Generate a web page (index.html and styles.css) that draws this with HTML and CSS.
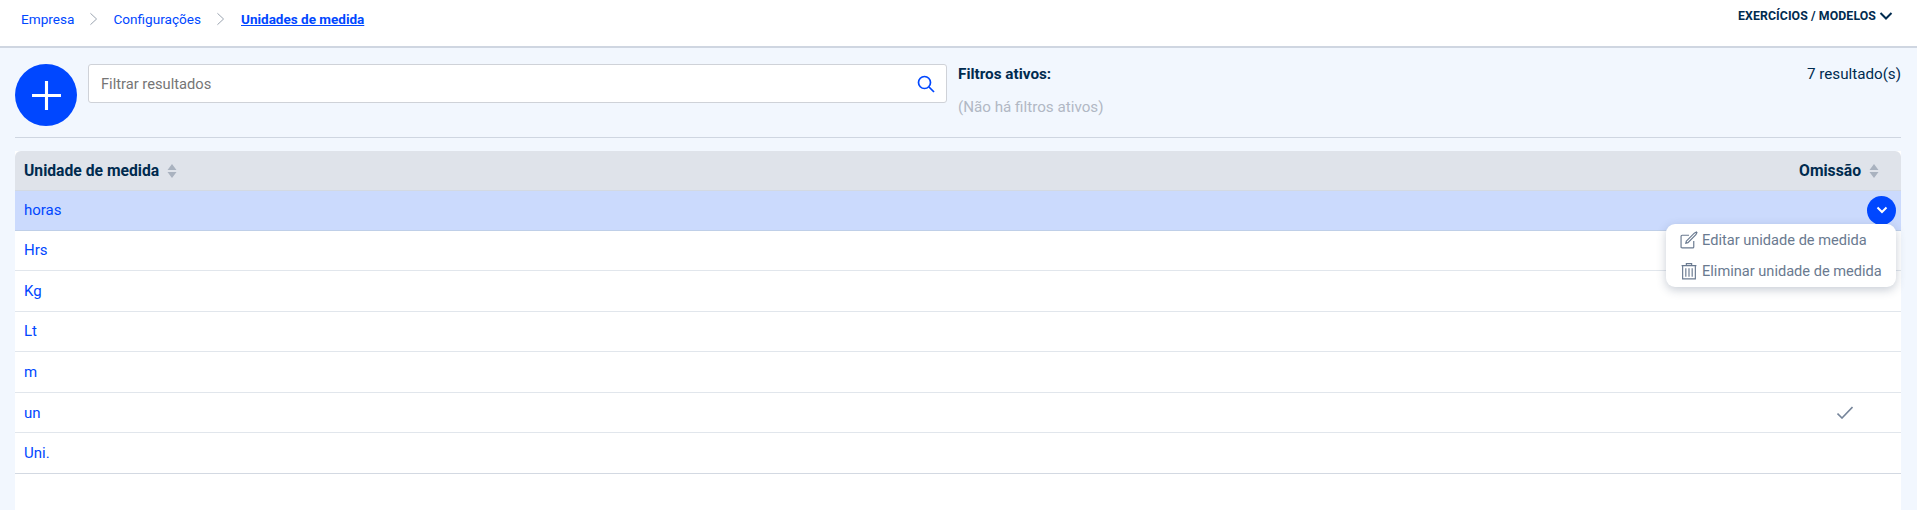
FILE: index.html
```html
<!DOCTYPE html>
<html lang="pt">
<head>
<meta charset="utf-8">
<title>Unidades de medida</title>
<link rel="stylesheet" href="styles.css">
</head>
<body>
<header class="topbar">
  <nav class="crumbs">
    <a class="crumb">Empresa</a>
    <svg class="crumb-sep" viewBox="0 0 10 16"><path d="M1.500 1.500 8.500 8l-7 6.500"/></svg>
    <a class="crumb">Configurações</a>
    <svg class="crumb-sep" viewBox="0 0 10 16"><path d="M1.500 1.500 8.500 8l-7 6.500"/></svg>
    <a class="crumb crumb-current">Unidades de medida</a>
  </nav>
  <div class="exercises">EXERCÍCIOS / MODELOS
    <svg class="exercises-chevron" viewBox="0 0 14 10"><path d="M1.500 2 7 7.500 12.500 2"/></svg>
  </div>
</header>
<main class="page">
  <section class="toolbar">
    <button class="add-btn" aria-label="Adicionar">
      <svg viewBox="0 0 30 30"><path d="M15 1v28M1 15h28"/></svg>
    </button>
    <div class="search">
      <span class="search-placeholder">Filtrar resultados</span>
      <svg class="search-icon" viewBox="0 0 18 18"><circle cx="7.500" cy="7.500" r="6"/><path d="M12 12l5 5"/></svg>
    </div>
    <div class="filters">
      <div class="filters-title">Filtros ativos:</div>
      <div class="filters-empty">(Não há filtros ativos)</div>
    </div>
    <div class="results">7 resultado(s)</div>
  </section>
  <section class="sheet">
    <div class="thead">
      <div class="th">Unidade de medida
        <svg class="sort" viewBox="0 0 10 14"><path d="M5 0l4.500 6H.5zM5 14 .5 8h9z"/></svg>
      </div>
      <div class="th">Omissão
        <svg class="sort" viewBox="0 0 10 14"><path d="M5 0l4.500 6H.5zM5 14 .5 8h9z"/></svg>
      </div>
    </div>
    <div class="row row-active">
      <span class="cell-name">horas</span>
      <button class="row-toggle" aria-label="Opções">
        <svg viewBox="0 0 12 8"><path d="M1.500 1.500 6 6l4.500-4.500"/></svg>
      </button>
      <div class="menu">
        <div class="menu-item">
          <svg class="menu-icon" viewBox="0 0 17 17"><path d="M13 9.500V15a1 1 0 0 1-1 1H2a1 1 0 0 1-1-1V5a1 1 0 0 1 1-1h6.500"/><path d="M6 9.500 13.500 2 15.500 1l.5.500-1 2L7.500 11 5.500 11.500z"/></svg>
          Editar unidade de medida
        </div>
        <div class="menu-item">
          <svg class="menu-icon" viewBox="0 0 17 17"><path d="M1.500 3.500h14M6 3.500V1.500h5v2M2.500 3.500V16h12V3.500M5.500 6v8M8.500 6v8M11.500 6v8"/></svg>
          Eliminar unidade de medida
        </div>
      </div>
    </div>
    <div class="row"><span class="cell-name">Hrs</span></div>
    <div class="row"><span class="cell-name">Kg</span></div>
    <div class="row"><span class="cell-name">Lt</span></div>
    <div class="row"><span class="cell-name">m</span></div>
    <div class="row">
      <span class="cell-name">un</span>
      <svg class="check" viewBox="0 0 16 13"><path d="M.5 7.500 5 12 15.500 1"/></svg>
    </div>
    <div class="row"><span class="cell-name">Uni.</span></div>
  </section>
</main>
</body>
</html>
```
FILE: styles.css
```css
* { box-sizing: border-box; }
html, body { margin: 0; height: 100%; }
body {
  font-family: Roboto, "Liberation Sans", sans-serif;
  font-size: 15px;
  color: #002b4f;
  background: #f2f7fe;
  overflow: hidden;
  display: flex;
  flex-direction: column;
}
.topbar {
  height: 48px;
  flex: none;
  background: #fff;
  border-bottom: 2px solid #cfd6e1;
  display: flex;
  justify-content: space-between;
  align-items: flex-start;
  padding: 11px 21px 0 21px;
}
.crumbs { display: flex; align-items: center; }
.crumb { font-size: 13.600px; line-height: 16px; color: #0047ff; }
.crumb-current { font-weight: 700; font-size: 13.500px; text-decoration: underline; }
.crumb-sep {
  width: 9px; height: 14px; margin: 0 15px 0 15px;
  fill: none; stroke: #8d97a5; stroke-width: 1;
}
.crumb-sep + .crumb-current { margin-left: 1px; }
.exercises {
  display: flex; align-items: center; gap: 3px;
  font-size: 12.300px; font-weight: 700; line-height: 16px;
  letter-spacing: .1px; color: #002b4f;
  margin-top: -3px;
  padding-right: 3px;
}
.exercises-chevron { width: 14px; height: 10px; fill: none; stroke: #002b4f; stroke-width: 2; }
.page {
  flex: 1;
  display: flex;
  flex-direction: column;
  padding: 0 16px 0 15px;
}
.toolbar {
  display: flex; align-items: flex-start;
  flex: none;
  height: 90px;
  padding-top: 16px;
  border-bottom: 1px solid #cfd6e1;
}
.add-btn {
  width: 62px; height: 62px; flex: none; padding: 0;
  border: 0; border-radius: 50%;
  background: #0047ff;
  display: flex; align-items: center; justify-content: center;
}
.add-btn svg { width: 31px; height: 31px; fill: none; stroke: #fff; stroke-width: 3; }
.search {
  width: 859px; height: 39px; margin-left: 11px; flex: none;
  background: #fff; border: 1px solid #cfd2d8; border-radius: 3px;
  display: flex; align-items: center; justify-content: space-between;
  padding: 0 11px 0 12px;
}
.search-placeholder { color: #757575; font-size: 14.700px; }
.search-icon { width: 18px; height: 18px; fill: none; stroke: #0047ff; stroke-width: 1.700; }
.filters { margin-left: 11px; width: 400px; }
.filters-title { font-size: 15.300px; font-weight: 700; line-height: 20px; }
.filters-empty { font-size: 15.200px; line-height: 20px; margin-top: 13px; color: #b1b8c4; }
.results { margin-left: auto; line-height: 20px; font-size: 15.200px; }
.sheet {
  flex: 1;
  margin-top: 13px;
  background: #fff;
}
.thead {
  height: 40px; display: flex; justify-content: space-between; align-items: center;
  background: #dfe3ea;
  border-radius: 6px 6px 0 0;
  padding: 0 22px 0 9px;
  border-bottom: 1px solid #d3d9e2;
}
.th { display: flex; align-items: center; gap: 8px; font-weight: 700; font-size: 15.700px; }
.sort { width: 10px; height: 14px; fill: #a9b2bf; }
.row {
  position: relative;
  height: 40.600px;
  display: flex; align-items: center; justify-content: space-between;
  padding: 0 5px 0 9px;
  border-bottom: 1px solid #e1e6ec;
}
.row:last-child { border-bottom-color: #d3d9e2; }
.row-active { background: #cbdafd; border-bottom-color: #bfcfe8; height: 39.500px; }
.cell-name { color: #0047ff; font-size: 15px; }
.row-toggle {
  width: 29px; height: 29px; padding: 0; border: 0; border-radius: 50%;
  background: #0047ff;
  display: flex; align-items: center; justify-content: center;
}
.row-toggle svg { width: 12px; height: 8px; fill: none; stroke: #fff; stroke-width: 2; }
.menu {
  position: absolute; top: 33px; right: 5px; z-index: 2;
  width: 230px; height: 63px;
  background: #fff; border-radius: 9px;
  box-shadow: 0 3px 10px rgba(40, 60, 90, .25);
  padding: 0 0 0 14px;
  display: flex; flex-direction: column; justify-content: center;
}
.menu-item {
  display: flex; align-items: center; gap: 4px;
  height: 32.500px; font-size: 14.600px; color: #6a7a90;
}
.menu-icon { width: 18px; height: 18px; flex: none; fill: none; stroke: #6a7a90; stroke-width: 1.100; }
.check { width: 16px; height: 13px; margin-right: 43px; fill: none; stroke: #76859a; stroke-width: 1.600; }
```
